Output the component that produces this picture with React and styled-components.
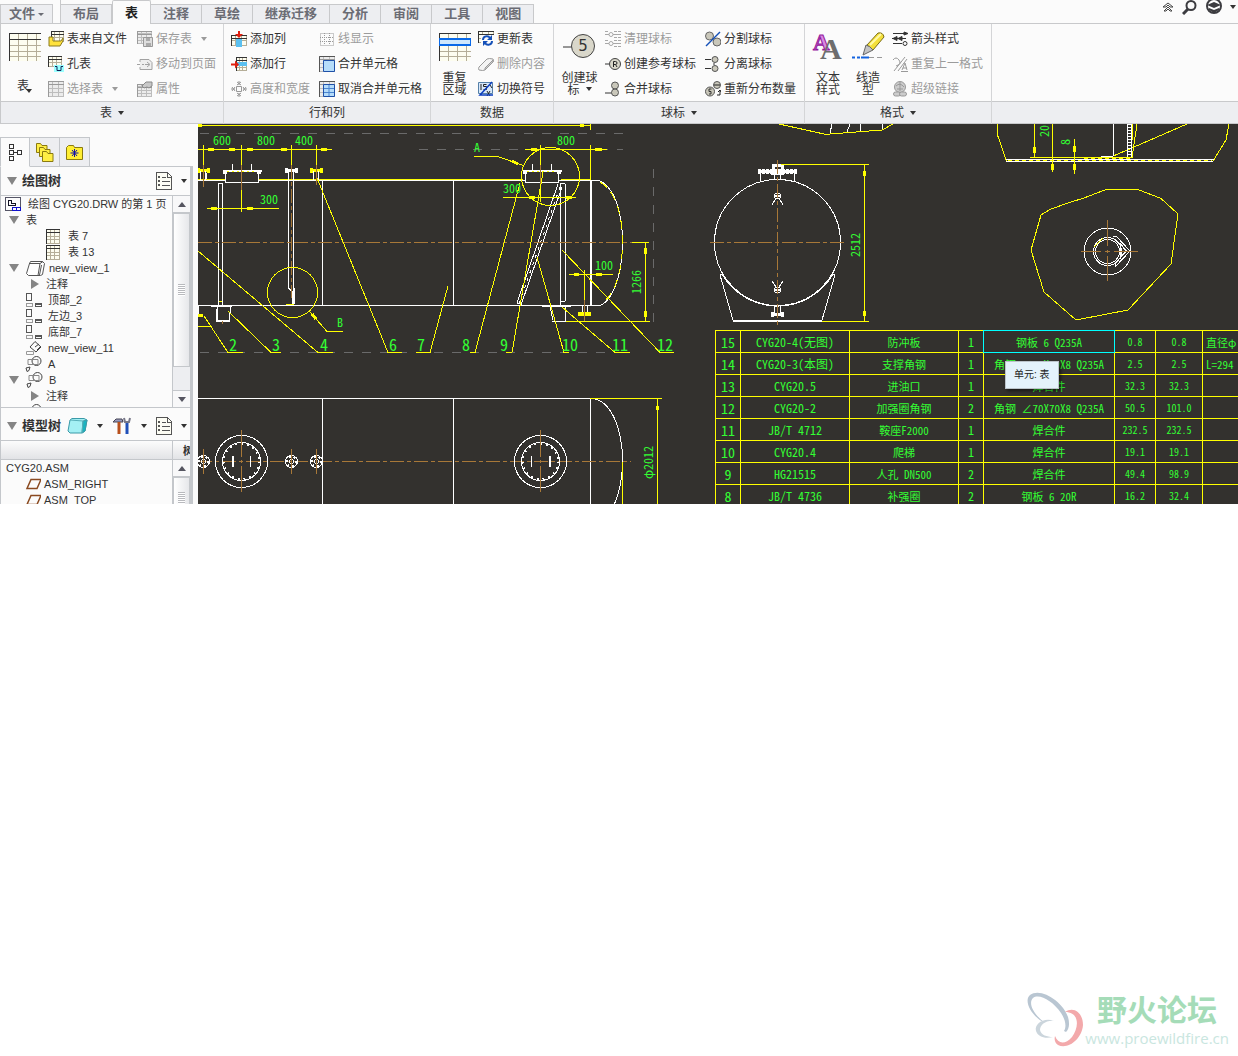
import React, { Component } from "react";
import styled, { createGlobalStyle } from "styled-components";

const WHITE = "#ffffff";
const YELLOW = "#ffff00";
const BROWN = "#a87838";
const GREEN = "#33ff33";
const GRAY = "#6a6a6a";

/* ---------- icons ---------- */

const Grid = ({ x = 0, y = 0, w = 16, h = 16, cols = 3, rows = 4, dim }) => {
  const lines = [];
  for (let i = 1; i <= cols; i++) {
    const px = x + Math.round((w * i) / cols) - 0.5;
    lines.push(<path key={"c" + i} d={`M${px} ${y}V${y + h}`} />);
  }
  for (let i = 1; i <= rows; i++) {
    const py = y + Math.round((h * i) / rows) - 0.5;
    lines.push(<path key={"r" + i} d={`M${x} ${py}H${x + w}`} />);
  }
  return (
    <g fill="none" shapeRendering="crispEdges">
      <rect x={x} y={y} width={w} height={h} fill={dim ? "#ececec" : "#fdfdf0"} />
      <g stroke={dim ? "#bdbdbd" : "#b5ae98"}>{lines}</g>
      <path
        d={`M${x + 0.5} ${y + h}V${y + 0.5}H${x + w}M${x} ${y + 3.5}H${x + w}`}
        stroke={dim ? "#9a9a9a" : "#333"}
      />
    </g>
  );
};

const icons = {
  fromFile: (
    <>
      <Grid x={3} y={0} w={13} h={11} rows={3} />
      <path d="M1 6h4v4h8l2-3v3l-3 5H1z" fill="#ffe23c" stroke="#8a7a20" />
    </>
  ),
  hole: (
    <>
      <Grid w={14} h={11} rows={3} />
      <path d="M6 9h10v7H6z" fill="#9ff" />
      <path d="M7 10.500h2v4h4v-4h2" fill="none" stroke="#125" />
    </>
  ),
  select: <Grid dim />,
  save: (
    <>
      <Grid w={15} h={13} dim />
      <path d="M6.500 6.500h9v9h-9z" fill="#ddd" stroke="#999" />
      <path d="M9 7h4v3H9zM9 12h5v3H9z" fill="#aaa" />
    </>
  ),
  move: (
    <g fill="none" stroke="#a2a2a2">
      <path d="M3 6V3.500h9l3 3v7H3V11" fill="#eee" />
      <path d="M0 8.500h3M5 8.500h2M8 8.500h4M10 6l3 2.500L10 11" />
    </g>
  ),
  props: (
    <>
      <Grid y={3} w={15} h={13} dim />
      <path d="M5 5l4-4h6v4l-3 2-2-1-3 1z" fill="#c8c8c8" stroke="#888" />
    </>
  ),
  addCol: (
    <>
      <Grid y={4} w={16} h={11} rows={2} />
      <path d="M5 8h6v8H5z" fill="#5bc0f0" />
      <path d="M8 7L4 3h3V0h2v3h3z" fill="#e02010" />
    </>
  ),
  addRow: (
    <>
      <Grid x={5} y={1} w={11} h={14} />
      <path d="M6 6h10v4H6z" fill="#5bc0f0" />
      <path d="M8 8.500l-4-4v3H0v2h4v3z" fill="#e02010" />
    </>
  ),
  size: (
    <g fill="none" stroke="#999">
      <path d="M5.500 5.500h5v5h-5zM8 0v4M8 12v4M0 8h4M12 8h4" />
      <path d="M6 1l4 3M10 1L6 4M6 12l4 3M10 12l-4 3M1 6l3 4M4 6l-3 4M12 6l3 4M15 6l-3 4" />
    </g>
  ),
  lineShow: (
    <g fill="none" stroke="#999" strokeDasharray="1 1">
      <path d="M1.500 2.500h13v12h-13zM5.500 2v12M10.500 2v12M1 6.500h14M1 10.500h14" />
    </g>
  ),
  merge: (
    <>
      <Grid dim />
      <path d="M4.500 4.500h11v11h-11z" fill="#b5dcfa" stroke="#1f50a8" />
      <path d="M.5 16V.500H16" fill="none" stroke="#555" />
    </>
  ),
  unmerge: (
    <>
      <Grid dim />
      <path d="M4.500 3.500h11v12h-11z" fill="#b5dcfa" stroke="#1f50a8" />
      <path d="M10 4v11M5 7.500h10M5 11.500h10" stroke="#4a84d0" />
      <path d="M.5 16V.500H16" fill="none" stroke="#555" />
    </>
  ),
  update: (
    <>
      <Grid h={12} rows={3} />
      <path d="M3 4h13v12H3z" fill="#fbfbfb" />
      <path d="M5 9c0-4 5-5 7-2M14 10c0 4-5 5-7 2" fill="none" stroke="#1450b8" strokeWidth="2" />
      <path d="M14 4v5H9zM5 15v-5h5z" fill="#1450b8" />
    </>
  ),
  eraser: (
    <g stroke="#9a9a9a">
      <path d="M1 11l8-8q2-1 6 0 1 1 0 3l-8 8q-2 1-6 0-1-1 0-3z" fill="#f4f4f4" />
      <path d="M7 14l8-8V4l-8 8z" fill="#ccc" />
    </g>
  ),
  symbol: (
    <>
      <path d="M.5 1.500h14v11H.5z" fill="#d8e8fa" stroke="#5580a8" />
      <path d="M3 3v6M8.500 3.500h-3v2h3v3h-3M9 10l3 5M12 10l-3 5M12 4l2 3" fill="none" stroke="#222" />
      <path d="M14 1L2 14h13" fill="none" stroke="#0a3cc0" strokeWidth="1.500" />
    </>
  ),
  clean: (
    <g fill="none" stroke="#a8a8a8">
      <path d="M0 3.500h4M8 3.500h8M0 12.500h4M8 12.500h8" />
      <circle cx="6" cy="3.500" r="2" />
      <circle cx="6" cy="12.500" r="2" />
      <path d="M0 .500h3M9 .500h7M9 6.500h7M0 9.500h3M9 9.500h7M9 15.500h7" strokeDasharray="3 1" />
    </g>
  ),
  refBall: (
    <>
      <path d="M0 8h4" stroke="#333" />
      <circle cx="10" cy="8" r="5.500" fill="#d8d6c8" stroke="#444" />
      <path d="M8.500 11V5.500h2q1.500 0 1.500 1.500T10.500 8.500h-2M10.500 8.500L12 11" fill="none" stroke="#222" />
    </>
  ),
  joinBall: (
    <g fill="#c9c7ba" stroke="#555">
      <path d="M0 12h7" stroke="#333" />
      <circle cx="10" cy="4.500" r="3.500" />
      <circle cx="10" cy="11.500" r="3.500" />
    </g>
  ),
  splitBall: (
    <g fill="#c9c7ba" stroke="#666">
      <circle cx="4.500" cy="5" r="4" />
      <circle cx="12" cy="11" r="4" />
      <path d="M15 1L1 15" stroke="#1450b8" strokeWidth="1.500" />
    </g>
  ),
  detachBall: (
    <g fill="#c9c7ba" stroke="#555">
      <path d="M0 3.500h6M0 12.500h6M9 7v2" stroke="#333" />
      <circle cx="10" cy="3.500" r="3" />
      <circle cx="10" cy="12.500" r="3" />
    </g>
  ),
  spread: (
    <g fill="#c9c7ba" stroke="#555">
      <circle cx="12" cy="4" r="3.500" />
      <path d="M9 4h6M12 14h3V9M13 11l2-2 1 2" fill="none" stroke="#222" />
      <circle cx="5" cy="10.500" r="4.500" />
      <path d="M6.500 8H4v2.500h2v2.500H4" fill="none" stroke="#333" />
    </g>
  ),
  arrows: (
    <g fill="none" stroke="#333">
      <path d="M1 2.500h12M0 7.500h14M1 12.500h9" />
      <path d="M12 1l4 1.500L12 4zM1 7.500l4-2v4zM6 7.500l4-2v4z" fill="#333" />
      <circle cx="13" cy="12.500" r="2" />
    </g>
  ),
  repeatFmt: (
    <g fill="none" stroke="#999">
      <path d="M1 4q3-4 6 0t-3 6M13 1L2 15M15 3L6 15M9 15.500h7M10 14l3-7 2 7M11 12h4" />
    </g>
  ),
  link: (
    <g fill="#ccc" stroke="#999">
      <circle cx="8" cy="6" r="5.500" />
      <path d="M4 5q4-4 8 1M5 8h6M8 1v9" fill="none" />
      <rect x="1.500" y="11" width="7" height="4" rx="2" />
      <rect x="7.500" y="11" width="7" height="4" rx="2" />
    </g>
  ),
  drw: (
    <g fill="none" stroke="#112" shapeRendering="crispEdges">
      <path d="M.5 1.500h15v13H.5z" stroke="#556" />
      <path d="M3.500 4.500v5h7v-2h-4v-3z" />
      <path d="M7.500 11.500h8v3h-8zM11.500 11v3" stroke="#11c" />
    </g>
  ),
  table: <Grid x={1} y={1} w={14} h={15} />,
  view3d: (
    <g fill="#fff" stroke="#555">
      <path d="M4.500 1.500h12l2 2-2 11-2 1h-12l-2-2 3-10z" />
      <path d="M3 3.500h11l-2 12M14 3.500l3-2M15.500 5l-2 10" fill="none" />
    </g>
  ),
  viewSet: (
    <g fill="none" stroke="#555" shapeRendering="crispEdges">
      <path d="M1.500 1.500h5v7h-5z" />
      <path d="M1.500 11.500h6v3h-6z" stroke="#999" />
      <path d="M10.500 11.500h6v3h-6zM10 12.500h7" />
    </g>
  ),
  viewRot: (
    <g fill="none" stroke="#444">
      <path d="M5 7l5-5.500L16 7l-5 5zM10 7l4-3M12 10l3-3" />
      <path d="M1.500 11.500h7v3h-7z" stroke="#999" />
    </g>
  ),
  detail: (
    <g fill="none" stroke="#444">
      <circle cx="11.500" cy="5" r="4.500" />
      <path d="M3 3.500h10v5H3z" stroke="#888" />
      <path d="M1 12l4-1-1 3.500-2 1z" />
    </g>
  ),
  plane: <path d="M6 3.500h10l-4 9H2z" fill="none" stroke="#8a4a20" strokeWidth="1.500" />,
  treeTab: (
    <g fill="none" stroke="#333" shapeRendering="crispEdges">
      <path d="M1.500 .500h4v4h-4zM1.500 6.500h4v4h-4zM1.500 12.500h4v4h-4zM9.500 6.500h4v4h-4zM6 8.500h3" />
    </g>
  ),
  folders: (
    <g fill="#ffee44" stroke="#8a7a10">
      <path d="M.5 3V.500h4L6 2.500h5v7H.5z" />
      <path d="M3.500 7V4.500h4L9 6.500h5v7H3.500z" />
      <path d="M6.500 11V8.500h4l1.500 2h5v8H6.500z" />
    </g>
  ),
  favourite: (
    <g>
      <path d="M.5 3.500l2-2h5l1 2h8v12H.5z" fill="#ffee33" stroke="#8a7a10" />
      <path d="M8.500 5v8M4.500 9h8M6 6l5 6M11 6l-5 6" stroke="#11a" />
    </g>
  ),
  settings: (
    <g fill="none" stroke="#555" shapeRendering="crispEdges">
      <path d="M.5 .500h11l4 4v13H.5z" fill="#fdfdf4" />
      <path d="M11.500 1v4h4M6 5.500h4M6 9.500h8M6 13.500h8" />
      <path d="M2.500 4.500h1v1h-1zM2.500 8.500h1v1h-1zM2.500 12.500h1v1h-1z" />
    </g>
  ),
  box: (
    <g stroke="#3a9aa8">
      <path d="M3 3l2-1.500h12L20 3l-2 11-3 2H3l-2-2z" fill="#a4f0f4" />
      <path d="M16 4l4-1-2 11-3 2z" fill="#18b5c0" />
      <path d="M3 3l13 1-1 12" fill="none" stroke="#58b0ba" />
    </g>
  ),
  tools: (
    <g fill="none">
      <path d="M1 5l3-3h6l1 3H7z" fill="#99b" stroke="#445" />
      <path d="M7 5v12" stroke="#b8501c" strokeWidth="3" />
      <path d="M15 6v11" stroke="#2050b8" strokeWidth="3" />
      <path d="M12 1l1 4h4l1-4" stroke="#778" strokeWidth="2" />
    </g>
  ),
};

const Icon = ({ name, w = 16, h = 16 }) => (
  <IconSvg width={w} height={h} viewBox={`0 0 ${w} ${h}`} aria-hidden="true">
    {icons[name]}
  </IconSvg>
);

const BigTable = ({ band }) => (
  <svg width="32" height="30" aria-hidden="true" shapeRendering="crispEdges">
    <rect x="1" y="1" width="30" height="28" fill="#fdfdf0" />
    <path
      d="M9.500 1v28M18.500 1v28M27.500 1v28M1 13.500h31M1 19.500h31M1 24.500h31"
      stroke="#b5ae98"
    />
    <path d="M.5 29V1.500H32M0 7.500h32" fill="none" stroke="#333" />
    {band && <path d="M0 7h32v6H0z" fill="#cfe8fc" stroke="#0a6ae8" strokeWidth="2" />}
  </svg>
);

const BigBalloon = () => (
  <svg width="34" height="30" aria-hidden="true">
    <path d="M0 15h9" stroke="#333" />
    <circle cx="20" cy="14" r="11.500" fill="#d9d7ca" stroke="#444" />
    <text x="20" y="19" textAnchor="middle" fontSize="15" fontFamily="DejaVu Sans" fill="#333">
      5
    </text>
  </svg>
);

const BigText = () => (
  <LetterSvg width="32" height="38" aria-hidden="true">
    <text x="1" y="22" fontSize="23" fill="#d98ae2" stroke="#94189c">
      A
    </text>
    <text x="8" y="31" fontSize="30" fill="#6d6d6d">
      A
    </text>
  </LetterSvg>
);

const BigPencil = () => (
  <svg width="34" height="30" aria-hidden="true">
    <path d="M1 25.500h10" stroke="#1464e0" strokeWidth="2" strokeDasharray="3 2" />
    <path d="M10 25.500h8" stroke="#1464e0" strokeWidth="2" />
    <path d="M18 25.500h14" stroke="#999" strokeDasharray="5 3" />
    <path d="M16 13L27 1q5-1 6 4L22 18z" fill="#f4e03a" stroke="#7a6c18" />
    <path d="M19 13L30 2" stroke="#fff9a8" strokeWidth="2" />
    <path d="M12 23l3-10q4 1 7 5z" fill="#c4c4c4" stroke="#666" />
  </svg>
);

/* ---------- data ---------- */

const tabs = ["布局", "表", "注释", "草绘", "继承迁移", "分析", "审阅", "工具", "视图"];

const groups = [
  {
    title: "表",
    menu: true,
    big: [{ width: 47, icon: <BigTable />, lines: ["表"], menu: true, below: true }],
    columns: [
      { width: 89, items: [["fromFile", "表来自文件"], ["hole", "孔表"], ["select", "选择表", "off", "menu"]] },
      { width: 86, items: [["save", "保存表", "off", "menu"], ["move", "移动到页面", "off"], ["props", "属性", "off"]] },
    ],
  },
  {
    title: "行和列",
    pad: 7,
    columns: [
      { width: 88, items: [["addCol", "添加列"], ["addRow", "添加行"], ["size", "高度和宽度", "off"]] },
      { width: 111, items: [["lineShow", "线显示", "off"], ["merge", "合并单元格"], ["unmerge", "取消合并单元格"]] },
    ],
  },
  {
    title: "数据",
    big: [{ width: 47, icon: <BigTable band />, lines: ["重复", "区域"] }],
    columns: [
      { width: 75, items: [["update", "更新表"], ["eraser", "删除内容", "off"], ["symbol", "切换符号"]] },
    ],
  },
  {
    title: "球标",
    menu: true,
    big: [{ width: 51, icon: <BigBalloon />, lines: ["创建球", "标"], menu: true }],
    columns: [
      { width: 100, items: [["clean", "清理球标", "off"], ["refBall", "创建参考球标"], ["joinBall", "合并球标"]] },
      { width: 99, items: [["splitBall", "分割球标"], ["detachBall", "分离球标"], ["spread", "重新分布数量"]] },
    ],
  },
  {
    title: "格式",
    menu: true,
    big: [
      { width: 46, icon: <BigText />, lines: ["文本", "样式"] },
      { width: 34, icon: <BigPencil />, lines: ["线造", "型"] },
    ],
    columns: [
      {
        width: 106,
        pad: 7,
        items: [["arrows", "箭头样式"], ["repeatFmt", "重复上一格式", "off"], ["link", "超级链接", "off"]],
      },
    ],
  },
];

const drawingTree = [
  { indent: 4, icon: "drw", label: "绘图 CYG20.DRW 的第 1 页" },
  { indent: 8, toggle: "open", label: "表" },
  { indent: 44, icon: "table", label: "表 7" },
  { indent: 44, icon: "table", label: "表 13" },
  { indent: 8, toggle: "open", icon: "view3d", label: "new_view_1" },
  { indent: 28, toggle: "closed", label: "注释" },
  { indent: 24, icon: "viewSet", label: "顶部_2" },
  { indent: 24, icon: "viewSet", label: "左边_3" },
  { indent: 24, icon: "viewSet", label: "底部_7" },
  { indent: 24, icon: "viewRot", label: "new_view_11" },
  { indent: 24, icon: "detail", label: "A" },
  { indent: 8, toggle: "open", icon: "detail", label: "B" },
  { indent: 28, toggle: "closed", label: "注释" },
  { indent: 24, icon: "detail", label: "" },
];

const modelTree = [
  { indent: 5, label: "CYG20.ASM" },
  { indent: 24, icon: "plane", label: "ASM_RIGHT", tight: true },
  { indent: 24, icon: "plane", label: "ASM_TOP", tight: true },
];

const parts = [
  ["15", "CYG20-4(无图)", "防冲板", "1", "钢板 6 Q235A", "0.8", "0.8", "直径φ"],
  ["14", "CYG20-3(本图)", "支撑角钢", "1", "角钢 ∠70X70X8 Q235A", "2.5", "2.5", "L=294"],
  ["13", "CYG20.5", "进油口", "1", "焊合件", "32.3", "32.3", ""],
  ["12", "CYG20-2", "加强圈角钢", "2", "角钢 ∠70X70X8 Q235A", "50.5", "101.0", ""],
  ["11", "JB/T 4712", "鞍座F2000", "1", "焊合件", "232.5", "232.5", ""],
  ["10", "CYG20.4", "爬梯", "1", "焊合件", "19.1", "19.1", ""],
  ["9", "HG21515", "人孔 DN500", "2", "焊合件", "49.4", "98.9", ""],
  ["8", "JB/T 4736", "补强圈", "2", "钢板 6 20R", "16.2", "32.4", ""],
];

const columnWidths = [25, 109, 109, 25, 131, 41, 47, 60];
const columnFonts = [14, 12, 11, 12, 11, 10, 10, 11];

// leader start x,y, knee x, end x, number, number x
const leaders = [
  [204, 316, 228, 243, "2", 229],
  [228, 311, 271, 281, "3", 272],
  [198, 251, 318, 333, "4", 320],
  [317, 178, 388, 402, "6", 389],
  [448, 286, 430, 416, "7", 417],
  [520, 183, 475, 470, "8", 462],
  [543, 172, 512, 506, "9", 500],
  [537, 257, 564, 569, "10", 562],
  [562, 307, 615, 630, "11", 612],
  [562, 250, 660, 674, "12", 657],
];

const dims = [
  [213, 145, "600"],
  [257, 145, "800"],
  [295, 145, "400"],
  [260, 204, "300"],
  [557, 145, "800"],
  [503, 193, "300"],
  [595, 270, "100"],
  [474, 152, "A"],
  [337, 327, "B"],
];

const sideDims = [
  [641, 294, "1266"],
  [860, 257, "2512"],
  [653, 479, "φ2012"],
  [1049, 137, "20"],
  [1070, 145, "8"],
];

/* ---------- drawing ---------- */

const Manhole = ({ x }) => (
  <g>
    <path d={`M${x - 16.5} 172V182.500H${x + 16.5}V172`} fill="#33312e" stroke={WHITE} />
    <path d={`M${x - 19} 171H${x + 20}`} stroke={WHITE} strokeWidth="2" />
    <path d={`M${x - 19} 172h4M${x + 15} 172h4`} stroke={WHITE} strokeWidth="4" />
    <path d={`M${x - 9.5} 164v6M${x + 9.5} 164v6`} stroke={WHITE} />
    <path d={`M${x - 15} 171.500H${x + 15}`} stroke={YELLOW} strokeDasharray="2 3" />
  </g>
);

const Nozzle = ({ x, color = WHITE }) => (
  <g stroke={color}>
    <path d={`M${x - 6} 170h12`} strokeWidth="3" />
    <path d={`M${x - 6} 170h3M${x + 4} 170h3`} strokeWidth="5" />
    <path d={`M${x - 2.5} 171v9M${x + 2.5} 171v9`} stroke={WHITE} />
  </g>
);

const PlanManhole = ({ x, thick }) => (
  <g stroke={WHITE} fill="none">
    <circle cx={x} cy="461.500" r="26" />
    <circle cx={x} cy="461.500" r="19" />
    <circle cx={x} cy="461.500" r="18" strokeWidth="2" strokeDasharray="2 4" />
    <path d={`M${x - 9} 456v11`} strokeWidth={thick === "left" ? 2 : 1} />
    <path d={`M${x + 9} 456v11`} strokeWidth={thick === "right" ? 2 : 1} />
    <path d={`M${x} 430v27M${x} 460v3M${x} 466v26`} stroke={BROWN} />
  </g>
);

const PlanNozzle = ({ x }) => (
  <g stroke={WHITE} fill="none">
    <circle cx={x} cy="461.500" r="6" />
    <circle cx={x} cy="461.500" r="5" strokeWidth="2" strokeDasharray="2 3" />
    <circle cx={x} cy="461.500" r="2" />
    <path d={`M${x} 449v25`} stroke={BROWN} />
  </g>
);

const Drawing = () => (
  <DrawingSvg width="1040" height="380" viewBox="198 124 1040 380" role="img" aria-label="CYG20">
    <g fill="none" shapeRendering="crispEdges">
      <g stroke={GRAY} strokeDasharray="9 9">
        <path d="M200 133.500H623M419 149.500H623M200 352.500H622M653.500 169V322" />
      </g>

      {/* side elevation */}
      <g stroke={WHITE}>
        <path d="M198 180.500H600M198 305.500H600M322.500 181V305M453.500 181V305" />
        <path d="M591 180V305" strokeWidth="2" />
        <path d="M218.500 183V305M222.500 183V305M218 183.500h5M560.500 183V305M565.500 184V301M560 183.500h5M560 301.500h5" />
        <path d="M590 180.500h9C615 187 622.500 214 622.500 242S615 299 600 305.500" />
        <path d="M288.500 172V288l4 4V305M293.500 172V305M294.500 288V304" />
        <path d="M198.500 306v10M200.500 181v-8M206.500 181v-8" />
        <path d="M211 306.500h21M217 307v13M231 307l-2 13" />
        <path d="M216 321h14M217 309v11" strokeWidth="2" />
        <path d="M542 306.500h29M550 307l3 13M565.500 307v14M552 321.500h14" />
        <path d="M582.500 306v9M587.500 306v9" />
        <path d="M558 184L517 303M562 187L521 305M517 303h4" />
        <path d="M560 187L519 304" strokeDasharray="3 5" />
      </g>
      <path d="M198 179.500H523M561 179.500H590" stroke={YELLOW} />
      <path d="M600 182C615 190 622.500 214 622.500 242S615 297 600 304" stroke={YELLOW} strokeDasharray="9 6" />
      <Manhole x={241.500} />
      <Manhole x={541.500} />
      <Nozzle x={291} />
      <Nozzle x={316} color={YELLOW} />
      <Nozzle x={203} color={YELLOW} />
      <path d="M578 314h13" stroke={YELLOW} strokeWidth="4" />
      <path d="M198 315h5" stroke={YELLOW} strokeWidth="3" />
      <path d="M198 326.500h14M286 304.500h8M219 301.500h3" stroke={YELLOW} />

      {/* front elevation */}
      <g stroke={WHITE}>
        <circle cx="777.500" cy="242.500" r="63" />
        <path d="M722 274A64 64 0 0 0 833 274M722 274l-2 1 13 45M833 274l2 1-13 45" />
        <path d="M760.500 173v9M794.500 173v9M774.500 172v7M780.500 172v7M774.500 306v8M780.500 306v8" />
        <path d="M733 321H822" strokeWidth="2" />
        <path d="M758 171H797" strokeWidth="3" />
        <path d="M758 171H797" strokeWidth="5" strokeDasharray="3 1" />
        <path d="M773 170v-5h9v5M771 314h13" strokeWidth="3" />
        <path d="M771 172h13M771 314h3M781 314h3" strokeWidth="5" />
        <circle cx="777.500" cy="196" r="3" />
        <path d="M776 198l-4 7M779 198l4 7M776 287l-4-6M779 287l4-6" />
        <path d="M774 195.500h7M774 289.500h7" strokeWidth="2" />
        <circle cx="777.500" cy="290" r="3" />
      </g>

      {/* plan */}
      <g stroke={WHITE}>
        <path d="M198 398.500H590M322.500 398V504M453.500 398V504M590.500 398V504" />
        <path d="M595 399C612 403 622.500 430 622.500 461q0 24-8 43" />
      </g>
      <path d="M198 461.500H631M198 242.500H633" stroke={BROWN} strokeDasharray="14 3 4 3" />
      <PlanNozzle x={203.500} />
      <PlanManhole x={241.500} thick="left" />
      <PlanNozzle x={291.500} />
      <PlanNozzle x={316.500} />
      <PlanManhole x={540.500} thick="right" />

      {/* section details, cropped by the top of the sheet */}
      <path d="M779 124l45 10h6l52-4 11-6" stroke={YELLOW} />
      <path d="M832 124l-2 9M850 124l-3 8M860.500 124v7M882.500 124v5" stroke={WHITE} />
      <path d="M997.500 124v11l9 26M1213 161l13-21 3-16M1132.500 124l-1 34M1137 124l-5 34M1111 157l76-33" stroke={YELLOW} />
      <path d="M1006 159.500H1214M1006 161.500H1213M1113.500 124v32M1101 156.500h12M1127.500 124v34M1131.500 124v34" stroke={WHITE} />
      <path d="M1008 160.500H1212M1084 158.500h47" stroke={YELLOW} strokeDasharray="4 3" />
      <path d="M1129.500 124v34" stroke={WHITE} strokeWidth="3" strokeDasharray="1 2" />
      <path
        d="M1106 189.500h32l23 9 17 15.500-7 50-43 46-52 10-32-28-13-42 10-35 10-6 17-6 16-5z"
        stroke={YELLOW}
      />
      <g stroke={WHITE}>
        <circle cx="1107.500" cy="251.500" r="23.500" />
        <circle cx="1107.500" cy="251.500" r="14" />
        <circle cx="1107.500" cy="251.500" r="12" />
        <path d="M1113 237l3-1 14 15-15 16v-4l12-12-12-12M1120 243l6 8-7 8M1120 243v16" />
      </g>
      <path d="M1094 247l9-9" stroke={YELLOW} />

      {/* centre lines */}
      <g stroke={BROWN}>
        <path d="M203.500 165v22M241.500 165v25M316.500 165v20M540.500 165v30M584.500 300v21M222.500 321v3" />
        <path d="M291.500 165V298M777.500 160V327M710 242.500H846" strokeDasharray="14 3 4 3" />
        <path d="M1081 251.500h20M1105 251.500h5M1114 251.500h24M1107.500 220v26M1107.500 250v3M1107.500 256v25" />
      </g>

      {/* dimensions and leaders */}
      <g stroke={YELLOW}>
        <path d="M198 125.500H590M590.500 124v6M198 149.500H332M525 149.500h82" />
        <path d="M203.500 145v20M241.500 145v20M241.500 190v22M291.500 145v20M316.500 145v20M540.500 145v20M540.500 188v14M590.500 145v35" />
        <path d="M207 208.500h72M503 197.500h73M569 274.500h44M584.500 270v30" />
        <path d="M645.500 242v79M632 242.500h17M566 321.500h84" />
        <path d="M781 164.500h88M864.500 164v157M822 321.500h47" />
        <path d="M590 398.500h72M657.500 398v106M622.500 462v42" />
        <path d="M1034.500 124v33M1052.500 124v48M1074.500 139v35M1030 157.500h102" />
        <path d="M474 156.500h24l25 9M309 311l18 20.500h16" />
        <circle cx="292.500" cy="292.500" r="25" />
        <circle cx="550.500" cy="176.500" r="29" />
        {leaders.map(([x, y, knee, end, no]) => (
          <path key={no} d={`M${x} ${y}L${knee} 352.500H${end}`} />
        ))}
      </g>
      <g stroke={YELLOW} strokeWidth="3">
        <path d="M198 125.500h4M580 125.500h4M208 149.500h6M229 149.500h6M247 149.500h6M281 149.500h6M321 149.500h6M531 149.500h6M595 149.500h7" />
        <path d="M211 208.500h6M247 208.500h6M529 197.500h6M566 197.500h6M574 274.500h5M596 274.500h6" />
        <path d="M645.500 248v6M645.500 311v6M864.500 171v5M864.500 311v5M657.500 406v4M1034.500 147v6M1052.500 164v6M1074.500 146v6M1074.500 164v6" />
        <path d="M512 161l6 3M312 314l4 5" />
      </g>
    </g>
    {dims.map(([x, y, t]) => (
      <DimText key={x + t} x={x} y={y}>
        {t}
      </DimText>
    ))}
    {sideDims.map(([x, y, t]) => (
      <DimText key={t} transform={`translate(${x} ${y}) rotate(-90)`}>
        {t}
      </DimText>
    ))}
    {leaders.map(([, , , , no, x]) => (
      <BalloonText key={no} x={x} y={351}>
        {no}
      </BalloonText>
    ))}
  </DrawingSvg>
);

/* ---------- parts of the window ---------- */

const Ribbon = () => (
  <RibbonBar>
    {groups.map((g) => (
      <Group key={g.title}>
        <GroupBody $pad={g.pad}>
          {(g.big || []).map((b) => (
            <BigButton key={b.lines[0]} $width={b.width}>
              {b.icon}
              <BigLabel $below={b.below}>
                {b.lines[0]}
                {b.lines[1] && <br />}
                {b.lines[1]}
                {b.menu && <Caret />}
              </BigLabel>
            </BigButton>
          ))}
          {g.columns.map((c) => (
            <ItemColumn key={c.items[0][0]} $width={c.width} $pad={c.pad}>
              {c.items.map(([icon, label, off, menu]) => (
                <Item key={icon} disabled={!!off}>
                  <Icon name={icon} />
                  {label}
                  {menu && <Caret />}
                </Item>
              ))}
            </ItemColumn>
          ))}
        </GroupBody>
        <GroupTitle>
          {g.title}
          {g.menu && <Caret />}
        </GroupTitle>
      </Group>
    ))}
    <RibbonRest>
      <GroupTitle as="div" />
    </RibbonRest>
  </RibbonBar>
);

const Tree = ({ rows }) => (
  <TreeList>
    {rows.map((r, i) => (
      <TreeRow key={i} $indent={r.indent}>
        {r.toggle && <Toggle>{r.toggle === "open" ? <Down /> : <Right />}</Toggle>}
        {r.icon && <Icon name={r.icon} w={r.tight ? 16 : 20} />}
        <span>{r.label}</span>
      </TreeRow>
    ))}
  </TreeList>
);

const ScrollBar = ({ thumb, grip }) => (
  <ScrollTrack>
    <ScrollButton aria-label="up">
      <Arrow $up />
    </ScrollButton>
    <ScrollThumb $height={thumb}>
      <Grip $top={grip} />
    </ScrollThumb>
    <ScrollButton $last aria-label="down">
      <Arrow />
    </ScrollButton>
  </ScrollTrack>
);

export default class App extends Component {
  render() {
    return (
      <Page>
        <GlobalStyle />
        <TabStrip>
          <FileTab>
            文件
            <Caret $small />
          </FileTab>
          <TabList>
            {tabs.map((t) => (
              <Tab key={t} $active={t === "表"}>
                {t}
              </Tab>
            ))}
          </TabList>
          <Tools>
            <ToolButton aria-label="最小化功能区">
              <svg width="12" height="10" fill="none" stroke="#444">
                <path d="M1 5l5-4 5 4H8L6 3 4 5zM2 9l4-4 4 4H8L6 7 4 9z" />
              </svg>
            </ToolButton>
            <ToolButton aria-label="搜索">
              <svg width="16" height="15" fill="none" stroke="#3c3c40">
                <circle cx="9" cy="5.500" r="4.500" strokeWidth="2" />
                <path d="M6 9l-5 5" strokeWidth="3" />
              </svg>
            </ToolButton>
            <ToolButton aria-label="学习">
              <svg width="16" height="15">
                <circle cx="8" cy="6" r="7" fill="#fff" stroke="#3c3c40" strokeWidth="2" />
                <path d="M1 5l7-3 7 3-7 3zM3 8l5 2 5-2v2l-5 3-5-3z" fill="#3c3c40" />
              </svg>
            </ToolButton>
            <Caret />
          </Tools>
        </TabStrip>
        <Ribbon />
        <Workspace>
          <Sidebar>
            <SideTabs>
              <SideTab $active aria-label="模型树">
                <Icon name="treeTab" w={15} h={17} />
              </SideTab>
              <SideTab aria-label="文件夹浏览器">
                <Icon name="folders" w={18} h={19} />
              </SideTab>
              <SideTab aria-label="收藏夹">
                <Icon name="favourite" w={18} h={17} />
              </SideTab>
              <SideTabRest />
            </SideTabs>
            <Panel>
              <PanelHead $height={29}>
                <Down />
                <h2>绘图树</h2>
                <HeadTools>
                  <Icon name="settings" w={16} h={18} />
                  <Caret />
                </HeadTools>
              </PanelHead>
              <PanelBody $height={212}>
                <Tree rows={drawingTree} />
                <ScrollBar thumb={154} grip={70} />
              </PanelBody>
              <PanelHead $height={33} $low>
                <Down />
                <h2>模型树</h2>
                <HeadTools>
                  <Icon name="box" w={21} h={18} />
                  <Caret />
                  <Icon name="tools" w={20} h={18} />
                  <Caret />
                  <Icon name="settings" w={16} h={18} />
                  <Caret />
                </HeadTools>
              </PanelHead>
              <ColumnHead>
                <span>树</span>
              </ColumnHead>
              <PanelBody>
                <Tree rows={modelTree} />
                <ScrollBar thumb={90} grip={14} />
              </PanelBody>
            </Panel>
          </Sidebar>
          <Canvas>
            <Drawing />
            <PartsTable>
              <colgroup>
                {columnWidths.map((w, i) => (
                  <Col key={i} $width={w} />
                ))}
              </colgroup>
              <tbody>
                {parts.map((row, r) => (
                  <tr key={row[0]}>
                    {row.map((cell, c) => (
                      <Cell
                        key={c}
                        $size={columnFonts[c]}
                        $left={c === 7}
                        $selected={r === 0 && c === 4}
                      >
                        {cell}
                      </Cell>
                    ))}
                  </tr>
                ))}
              </tbody>
            </PartsTable>
            <Tooltip role="tooltip">单元: 表</Tooltip>
          </Canvas>
        </Workspace>
        <Footer>
          <svg width="58" height="58" aria-hidden="true" fillRule="evenodd">
            <path
              d="M3 3C14-5 36 10 41 25c2 7 1 12-2 15l-2-1c3-5 1-12-3-18C26 9 12 1 6 6c-5 5 0 16 12 25C5 25-4 9 3 3z"
              fill="#b9c6d2"
            />
            <path d="M27 29c-10-4-20 3-18 10 2 6 9 8 17 6-6 0-12-2-13-7 0-5 6-10 14-9z" fill="#cbd5dc" />
            <path d="M38 20c9-6 18 1 18 13C55 47 41 58 31 53c-3-2-4-5-3-9 3 8 10 9 17 1 7-9 8-25-7-25z" fill="#f3a9ab" />
          </svg>
          <FooterText>
            <strong>野火论坛</strong>
            <a href="#forum">www.proewildfire.cn</a>
          </FooterText>
        </Footer>
      </Page>
    );
  }
}

/* ---------- styles ---------- */

// half-width latin glyphs keep the figures narrow, as on a drafting sheet
const cadType = `
  font-family: "Noto Sans CJK SC", monospace;
  font-feature-settings: "hwid";
`;

const GlobalStyle = createGlobalStyle`
  * {
    box-sizing: border-box;
  }

  body {
    margin: 0;
    background: #fff;
    color: #333;
    font: 12px/16px "Liberation Sans", "Noto Sans CJK SC", sans-serif;
  }

  button {
    margin: 0;
    padding: 0;
    border: none;
    background: none;
    color: inherit;
    font: inherit;
    white-space: nowrap;
  }
`;

const Page = styled.div`
  display: flex;
  flex-direction: column;
  min-height: 100vh;
  overflow: hidden;
`;

const IconSvg = styled.svg`
  flex: none;
`;

const LetterSvg = styled.svg`
  margin: -4px 0;
  overflow: visible;
  font-family: "Liberation Serif", serif;
  font-weight: bold;
`;

const Caret = styled.i`
  flex: none;
  display: inline-block;
  margin-left: ${(props) => (props.$small ? "3px" : "6px")};
  border: 3px solid transparent;
  border-top: ${(props) => (props.$small ? "3px" : "4px")} solid currentColor;
  border-bottom: none;
`;

const TabStrip = styled.header`
  display: flex;
  align-items: flex-end;
  height: 24px;
  background: #fbfbfb;
  border-bottom: 1px solid #c8c9cb;
`;

const Tab = styled.button`
  height: ${(props) => (props.$active ? "24px" : "19px")};
  margin-bottom: ${(props) => (props.$active ? "-1px" : "0")};
  padding: 0 12px ${(props) => (props.$active ? "0" : "1px")};
  border: 1px solid #c8c9cb;
  border-width: 1px 1px 0 0;
  border-left-width: ${(props) => (props.$active ? "1px" : "0")};
  border-radius: ${(props) => (props.$active ? "2px 2px 0 0" : "0")};
  background: ${(props) => (props.$active ? "#fbfbfb" : "#edeef1")};
  color: ${(props) => (props.$active ? "#222" : "#6b6c74")};
  font-size: 13px;
  font-weight: bold;
`;

const FileTab = styled(Tab)`
  display: flex;
  align-items: center;
  padding: 0 8px;
  border-left-width: 1px;
`;

const TabList = styled.nav`
  display: flex;
  align-items: flex-end;
  margin-left: 7px;
  border-left: 1px solid #c8c9cb;
`;

const Tools = styled.div`
  display: flex;
  align-items: center;
  align-self: flex-start;
  gap: 8px;
  height: 14px;
  margin-left: auto;
  padding-right: 2px;

  i {
    margin-left: 0;
  }
`;

const ToolButton = styled.button`
  display: flex;
`;

const RibbonBar = styled.div`
  display: flex;
  height: 100px;
  background: #fbfbfb;
  border-left: 1px solid #c8c9cb;
`;

const Group = styled.section`
  display: flex;
  flex: none;
  flex-direction: column;
  border-right: 1px solid #d4d5d7;
`;

const RibbonRest = styled.div`
  display: flex;
  flex: 1;
  flex-direction: column;
  justify-content: flex-end;
`;

const GroupBody = styled.div`
  display: flex;
  flex: 1;
  padding: 3px 0 0 ${(props) => props.$pad || 0}px;
`;

const GroupTitle = styled.h2`
  display: flex;
  flex: none;
  align-items: center;
  justify-content: center;
  height: 23px;
  margin: 0;
  background: #edeef1;
  border: 1px solid #c8c9cb;
  border-width: 1px 0;
  font-size: 12px;
  font-weight: normal;
`;

const BigButton = styled.button`
  display: flex;
  flex-direction: column;
  align-items: center;
  width: ${(props) => props.$width}px;
  padding-top: 5px;
  line-height: 12px;
`;

const BigLabel = styled.span`
  margin-top: ${(props) => (props.$below ? "18px" : "10px")};

  i {
    margin-left: ${(props) => (props.$below ? "-3px" : "6px")};
    vertical-align: ${(props) => (props.$below ? "-3px" : "3px")};
  }
`;

const ItemColumn = styled.div`
  display: flex;
  flex-direction: column;
  gap: 1px;
  width: ${(props) => props.$width}px;
  padding-left: ${(props) => props.$pad || 0}px;
`;

const Item = styled.button`
  display: flex;
  align-items: center;
  gap: 3px;
  height: 24px;

  &:disabled {
    color: #9b9b9b;
  }
`;

const Workspace = styled.main`
  display: flex;
  height: 380px;
  background: #fbfbfb;
`;

const Sidebar = styled.aside`
  display: flex;
  flex: none;
  flex-direction: column;
  width: 198px;
  padding: 13px 5px 0 0;
`;

const SideTabs = styled.div`
  display: flex;
  height: 30px;
`;

const SideTab = styled.button`
  display: flex;
  align-items: center;
  justify-content: center;
  width: 30px;
  border: 1px solid #c4c7cb;
  border-left-width: ${(props) => (props.$active ? "1px" : "0")};
  border-bottom-color: ${(props) => (props.$active ? "#fbfbfb" : "#c4c7cb")};
  background: ${(props) => (props.$active ? "#fbfbfb" : "#edeef1")};
`;

const SideTabRest = styled.div`
  flex: 1;
  border-bottom: 1px solid #c4c7cb;
`;

const Panel = styled.div`
  display: flex;
  flex: 1;
  flex-direction: column;
  min-height: 0;
  border: solid #c4c7cb;
  border-width: 0 3px 0 1px;
  font-size: 11px;
`;

const PanelHead = styled.div`
  display: flex;
  flex: none;
  align-items: center;
  height: ${(props) => props.$height}px;
  padding: ${(props) => (props.$low ? "4px" : "0")} 3px 0 6px;
  border-bottom: 1px solid #c4c7cb;

  h2 {
    margin: 0 0 0 5px;
    font-size: 13px;
  }
`;

const HeadTools = styled.div`
  display: flex;
  align-items: center;
  justify-content: flex-end;
  flex: 1;

  i {
    margin: 0 0 0 9px;
  }

  i + svg {
    margin-left: 9px;
  }
`;

const PanelBody = styled.div`
  display: flex;
  flex: ${(props) => (props.$height ? "none" : "1")};
  height: ${(props) => (props.$height ? props.$height + "px" : "auto")};
  min-height: 0;
  overflow: hidden;
  border-bottom: ${(props) => (props.$height ? "1px solid #c4c7cb" : "none")};
`;

const TreeList = styled.ul`
  flex: 1;
  min-width: 0;
  margin: 0;
  padding: 0;
  overflow: hidden;
  list-style: none;
`;

const TreeRow = styled.li`
  display: flex;
  align-items: center;
  gap: 3px;
  height: 16px;
  padding-left: ${(props) => props.$indent}px;
  white-space: nowrap;
`;

const Toggle = styled.span`
  display: flex;
  justify-content: flex-start;
  width: 14px;
`;

const Down = styled.i`
  border: 5px solid transparent;
  border-top: 8px solid #858585;
  border-bottom: none;
`;

const Right = styled.i`
  margin-left: 2px;
  border: 5px solid transparent;
  border-left: 8px solid #858585;
  border-right: none;
`;

const ScrollTrack = styled.div`
  display: flex;
  flex: none;
  flex-direction: column;
  width: 18px;
  background: #edeef1;
  border-left: 1px solid #c4c7cb;
`;

const ScrollButton = styled.button`
  display: flex;
  flex: none;
  align-items: center;
  justify-content: center;
  height: 17px;
  margin-top: ${(props) => (props.$last ? "auto" : "0")};
  border: 1px solid #c4c7cb;
  border-width: ${(props) => (props.$last ? "1px 0 0" : "0 0 1px")};
  background: #f8f8f9;
`;

const Arrow = styled.i`
  border: 4px solid transparent;
  border-top: ${(props) => (props.$up ? "none" : "5px solid #555560")};
  border-bottom: ${(props) => (props.$up ? "5px solid #555560" : "none")};
`;

const ScrollThumb = styled.div`
  flex: none;
  height: ${(props) => props.$height}px;
  border: 1px solid #c4c7cb;
  background: linear-gradient(90deg, #fff, #e6e7ea);
`;

const Grip = styled.div`
  height: 12px;
  margin: ${(props) => props.$top}px 4px 0;
  background: repeating-linear-gradient(#b8b9bd 0 1px, #fff 1px 2px);
`;

const ColumnHead = styled.div`
  display: flex;
  flex: none;
  justify-content: flex-end;
  height: 19px;
  border-bottom: 1px solid #c4c7cb;
  background: linear-gradient(#fcfcfc, #e2e3e6);

  span {
    width: 18px;
    padding-left: 10px;
    border-left: 1px solid #c4c7cb;
    overflow: hidden;
    font-weight: bold;
    line-height: 20px;
    white-space: nowrap;
  }
`;

const Canvas = styled.div`
  position: relative;
  flex: 1;
  min-width: 0;
  overflow: hidden;
  background: #33312e;
`;

const DrawingSvg = styled.svg`
  display: block;
`;

const DimText = styled.text`
  ${cadType}
  fill: ${GREEN};
  font-size: 12px;
`;

const BalloonText = styled.text`
  ${cadType}
  fill: ${GREEN};
  font-size: 16px;
`;

const PartsTable = styled.table`
  ${cadType}
  position: absolute;
  top: 206px;
  left: 517px;
  width: 547px;
  table-layout: fixed;
  border-collapse: collapse;
  background: #33312e;
  color: ${GREEN};
`;

const Col = styled.col`
  width: ${(props) => props.$width}px;
`;

const Cell = styled.td`
  height: 22px;
  padding: 0 ${(props) => (props.$left ? "3px" : "0")};
  border: 1px ${(props) => (props.$selected ? "double #00ffff" : "solid #ffff00")};
  font-size: ${(props) => props.$size}px;
  line-height: 16px;
  text-align: ${(props) => (props.$left ? "left" : "center")};
  white-space: nowrap;
`;

const Tooltip = styled.div`
  position: absolute;
  top: 237px;
  left: 807px;
  padding: 5px 8px;
  border: 1px solid #bcc4ca;
  background: #e4f2fb;
  box-shadow: 2px 2px 3px rgba(0, 0, 0, 0.5);
  color: #222;
  font-size: 10px;
`;

const Footer = styled.footer`
  display: flex;
  align-items: flex-end;
  justify-content: flex-end;
  margin-top: auto;
  padding: 8px 9px 6px;
`;

const FooterText = styled.div`
  display: flex;
  flex-direction: column;
  align-items: flex-end;

  strong {
    padding-right: 12px;
    color: #a5dcb8;
    font-family: "Noto Sans CJK SC", sans-serif;
    font-size: 30px;
    line-height: 36px;
  }

  a {
    color: #c9e6e0;
    font-family: "Open Sans", sans-serif;
    font-size: 15px;
    line-height: 24px;
    text-decoration: none;
  }
`;
